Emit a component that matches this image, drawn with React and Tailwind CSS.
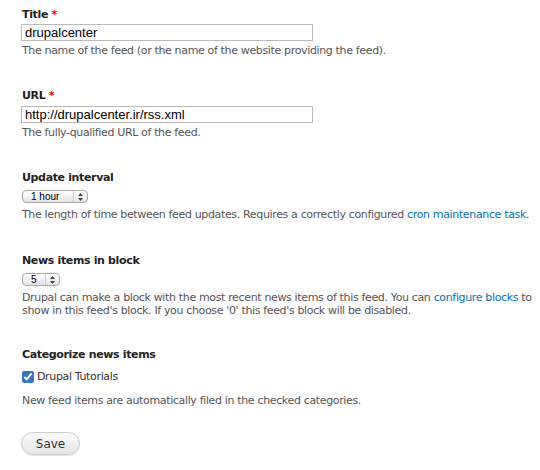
import React from "react";

const Label = ({ children, required }) => (
  <label className="block font-bold text-[#222] leading-[14px]">
    {children}
    {required && <span className="text-[#f00]"> *</span>}
  </label>
);

const Desc = ({ children, className = "" }) => (
  <div className={"text-[#555] leading-[13px] " + className}>{children}</div>
);

const Select = ({ value, width }) => (
  <div
    className={
      "mt-[5px] flex items-center justify-between h-[13px] rounded-[4px] border border-[#aaa] bg-gradient-to-b from-white to-[#e4e4e4] pl-[8px] pr-[4px] " +
      width
    }
  >
    <span className="text-[10px] leading-none text-black font-['Liberation_Sans',sans-serif] tracking-normal">{value}</span>
    <span className="flex items-center border-l border-[#ccc] pl-[4px] h-full">
      <svg width="5" height="8" viewBox="0 0 5 8">
        <path d="M2.5 0 L5 3 H0 Z M0 5 H5 L2.5 8 Z" fill="#444" />
      </svg>
    </span>
  </div>
);

const App = () => {
  return (
    <div className="w-[540px] h-[470px] bg-white pl-[22px] pt-[8px] text-[11px] font-['DejaVu_Sans',sans-serif] tracking-[-0.35px]">
      <div>
        <Label required>Title</Label>
        <input
          defaultValue="drupalcenter"
          className="mt-[2px] block w-[292px] h-[17px] -ml-[1px] border border-[#bbb] px-[3px] text-[13px] text-black font-['Liberation_Sans',sans-serif] tracking-normal outline-none"
        />
        <Desc className="mt-[3px]">
          The name of the feed (or the name of the website providing the feed).
        </Desc>
      </div>

      <div className="mt-[32px]">
        <Label required>URL</Label>
        <input
          defaultValue="http://drupalcenter.ir/rss.xml"
          className="mt-[3px] block w-[292px] h-[17px] -ml-[1px] border border-[#bbb] px-[3px] text-[13px] text-black font-['Liberation_Sans',sans-serif] tracking-normal outline-none"
        />
        <Desc className="mt-[3px]">The fully-qualified URL of the feed.</Desc>
      </div>

      <div className="mt-[32px]">
        <Label>Update interval</Label>
        <Select value="1 hour" width="w-[66px]" />
        <Desc className="mt-[5px]">
          The length of time between feed updates. Requires a correctly configured{" "}
          <a className="text-[#0071b3]">cron maintenance task</a>.
        </Desc>
      </div>

      <div className="mt-[33px]">
        <Label>News items in block</Label>
        <Select value="5" width="w-[38px]" />
        <Desc className="mt-[5px]">
          Drupal can make a block with the most recent news items of this feed. You can{" "}
          <a className="text-[#0071b3]">configure blocks</a> to
          <br />
          show in this feed's block. If you choose '0' this feed's block will be disabled.
        </Desc>
      </div>

      <div className="mt-[31px]">
        <Label>Categorize news items</Label>
        <label className="mt-[8px] flex items-center gap-[3px] text-[#333] leading-[13px]">
          <input type="checkbox" defaultChecked className="w-[12px] h-[12px] m-0 accent-[#3b73c8]" />
          Drupal Tutorials
        </label>
        <Desc className="mt-[11px]">
          New feed items are automatically filed in the checked categories.
        </Desc>
      </div>

      <button className="mt-[25px] -ml-[1px] w-[59px] h-[23px] rounded-full border border-[#ccc] bg-gradient-to-b from-[#fafafa] to-[#e6e6e6] text-[12px] text-[#333] tracking-normal font-['DejaVu_Sans',sans-serif] shadow-[0_1px_1px_rgba(0,0,0,0.1)]">
        Save
      </button>
    </div>
  );
};

export default App;
